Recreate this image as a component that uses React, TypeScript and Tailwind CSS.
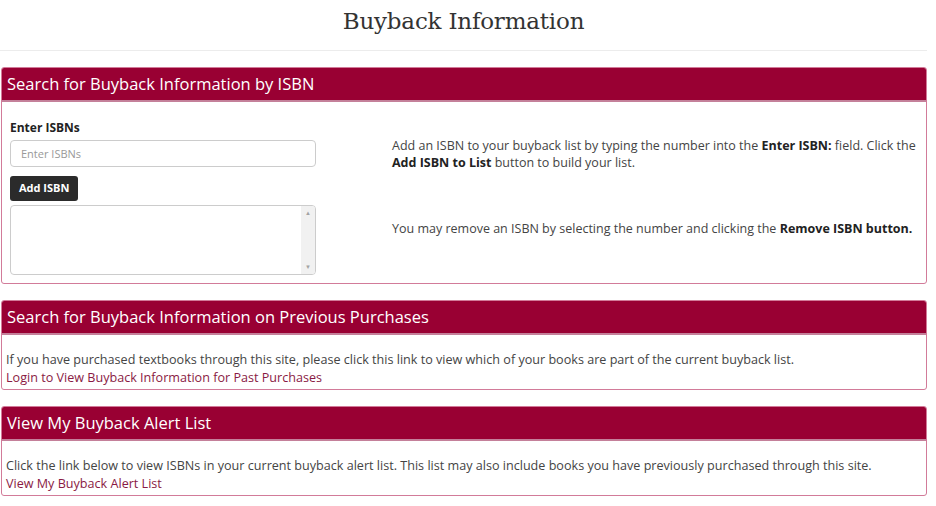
import React from "react";

const body = "font-['Open_Sans',sans-serif]";

function Panel({ title, children }: { title: string; children: React.ReactNode }) {
  return (
    <div className="border border-[#d27b99] rounded-[3px] overflow-hidden">
      <div className="bg-[#990033] border-b-2 border-[#c4809a] h-[34px] flex items-center px-[5px]">
        <h2 className="text-white text-[16.5px] leading-none">{title}</h2>
      </div>
      {children}
    </div>
  );
}

export default function App() {
  return (
    <div className={`${body} w-[936px] bg-white text-[#333] pr-[9px]`}>
      <div className="h-[51px] flex items-center justify-center border-b border-[#ececec] mb-[16px]">
        <h1 className="font-['DejaVu_Serif',serif] text-[23px] text-[#333] tracking-[-0.2px] pb-[7px]">
          Buyback Information
        </h1>
      </div>

      <div className="pl-[1px] flex flex-col gap-[16px]">
        <Panel title="Search for Buyback Information by ISBN">
          <div className="flex px-[8px] pt-[17px] pb-[8px]">
            <div className="w-[306px] flex flex-col">
              <label className="text-[12px] font-bold text-[#222] leading-[18px]">Enter ISBNs</label>
              <input
                placeholder="Enter ISBNs"
                className="mt-[3px] h-[27px] border border-[#ccc] rounded-[4px] px-[10px] text-[11px] placeholder:text-[#999] outline-none"
              />
              <button className="mt-[9px] self-start h-[25px] px-[9px] bg-[#2b2b2b] text-white text-[11px] font-bold rounded-[3px]">
                Add ISBN
              </button>
              <div className="mt-[4px] h-[70px] border border-[#ccc] rounded-[4px] flex justify-end overflow-hidden">
                <div className="w-[14px] bg-[#f1f1f1] flex flex-col items-center justify-between py-[4px] text-[#a3a3a3] text-[6px] leading-none">
                  <span>▲</span>
                  <span>▼</span>
                </div>
              </div>
            </div>
            <div className="ml-[76px] flex-1 text-[12.5px] leading-[17px] text-[#444] pt-[18px]">
              <p>
                Add an ISBN to your buyback list by typing the number into the <b className="text-[#222]">Enter ISBN:</b> field. Click the{" "}
                <b className="text-[#222]">Add ISBN to List</b> button to build your list.
              </p>
              <p className="mt-[49px]">
                You may remove an ISBN by selecting the number and clicking the <b className="text-[#222]">Remove ISBN button.</b>
              </p>
            </div>
          </div>
        </Panel>

        <Panel title="Search for Buyback Information on Previous Purchases">
          <div className="px-[4px] pt-[16px] pb-[2px] text-[12.6px] leading-[18px] text-[#444]">
            <p>If you have purchased textbooks through this site, please click this link to view which of your books are part of the current buyback list.</p>
            <a href="#" className="text-[#8a1a44]">Login to View Buyback Information for Past Purchases</a>
          </div>
        </Panel>

        <Panel title="View My Buyback Alert List">
          <div className="px-[4px] pt-[16px] pb-[2px] text-[12.6px] leading-[18px] text-[#444]">
            <p>Click the link below to view ISBNs in your current buyback alert list. This list may also include books you have previously purchased through this site.</p>
            <a href="#" className="text-[#8a1a44]">View My Buyback Alert List</a>
          </div>
        </Panel>
      </div>
    </div>
  );
}
